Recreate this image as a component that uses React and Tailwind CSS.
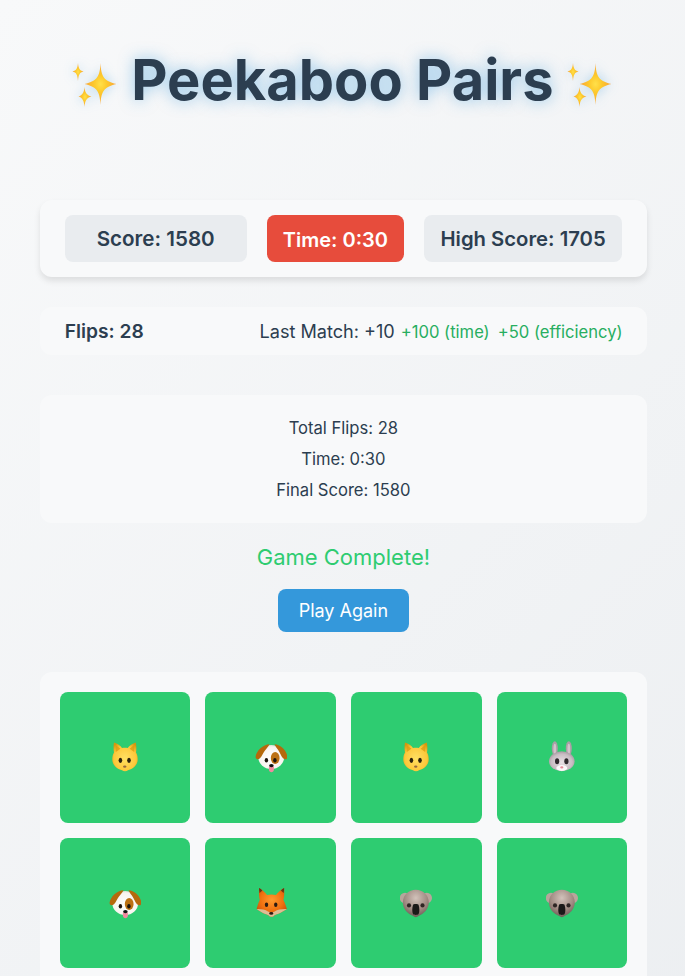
const Sparkles = () => (
    <svg viewBox="1.5 0 46 46" className="mt-2 h-[46px] w-[46px] shrink-0 blur-[0.3px] drop-shadow-[0_0_6px_rgba(52,152,219,0.35)]">
        <defs>
            <radialGradient id="spark">
                <stop offset="0%" stopColor="#ffe04a" />
                <stop offset="40%" stopColor="#fdc92c" />
                <stop offset="100%" stopColor="#f9a33a" />
            </radialGradient>
        </defs>
        <path fill="url(#spark)" d="M30 1 C30.6 14 33 19 46 22 C33 25 30.6 30 30 43 C29.4 30 27 25 14 22 C27 19 29.4 14 30 1Z" />
        <path fill="url(#spark)" d="M7.5 1 C7.9 6 9 8.5 13 9.5 C9 10.5 7.9 13 7.5 19 C7.1 13 6 10.5 2 9.5 C6 8.5 7.1 6 7.5 1Z" />
        <path fill="url(#spark)" d="M14 25 C14.4 30 16 33.5 21 34.5 C16 35.5 14.4 39 14 45 C13.6 39 12 35.5 8 34.5 C12 33.5 13.6 30 14 25Z" />
    </svg>
);

const Cat = () => (
    <svg viewBox="0 0 32 32" className="h-8 w-8 blur-[0.3px]">
        <defs>
            <radialGradient id="catFace" cx="50%" cy="55%" r="62%">
                <stop offset="0%" stopColor="#ffe063" />
                <stop offset="70%" stopColor="#fdc83a" />
                <stop offset="100%" stopColor="#d4960e" />
            </radialGradient>
        </defs>
        <path fill="url(#catFace)" d="M5 1.6 C8.5 2.6 11.5 5 13 7 C14.8 6.6 17 6.6 18.8 7 C20.3 5 23.5 2.6 26.8 1.6 C27.6 5 27.5 8.5 27 11.5 C28.6 14 29 17.5 28.5 20.5 C27.5 25.5 22.5 28.5 19 29.2 C17.5 30.6 14.5 30.6 13 29.2 C9.5 28.5 4.5 25.5 3.5 20.5 C3 17.5 3.4 14 5 11.5 C4.4 8.5 4.3 5 5 1.6Z" />
        <path fill="#d9990f" d="M6.4 3.8 L11.4 7.8 L6.8 11Z M25.5 3.8 L20.6 7.8 L25.2 11Z" opacity="0.75" />
        <ellipse cx="11.4" cy="19.3" rx="1.8" ry="2.6" fill="#2c210b" />
        <ellipse cx="20" cy="19.3" rx="1.8" ry="2.6" fill="#2c210b" />
        <ellipse cx="15.75" cy="25.6" rx="1.7" ry="1.2" fill="#94683e" />
    </svg>
);

const Dog = () => (
    <svg viewBox="0 0 32 32" className="h-8 w-8 blur-[0.3px]">
        <defs>
            <radialGradient id="dogFace" cx="50%" cy="55%" r="60%">
                <stop offset="0%" stopColor="#ffffff" />
                <stop offset="78%" stopColor="#f8f4ef" />
                <stop offset="100%" stopColor="#d6ccc2" />
            </radialGradient>
        </defs>
        <ellipse cx="16.2" cy="16" rx="13" ry="12" fill="url(#dogFace)" />
        {/* Ears wrap over the top of the head */}
        <path fill="#b5690c" d="M14.5 3.2 C8 3.4 1.6 9.5 .6 15.5 C.4 18.5 3 19 5 17.2 C7.2 15 8 12 9.6 10 C11 8 13.5 5.5 14.5 3.2Z" />
        <path fill="#b5690c" d="M19.5 3.3 C25.5 3.4 31.6 9.5 32.4 15.5 C32.6 18.5 30 19 28 17.2 C26 15 25.2 12 23.8 10 C22.4 8 20.5 5.5 19.5 3.3Z" />
        <ellipse cx="20.2" cy="17" rx="4.4" ry="6" fill="#bb7013" />
        <ellipse cx="11.4" cy="19.2" rx="1.7" ry="2.3" fill="#1d140d" />
        <ellipse cx="19.9" cy="19.2" rx="1.7" ry="2.3" fill="#1d140d" />
        <path fill="#f08aa0" d="M13.9 25.5 H18.9 V28.5 C18.9 32 13.9 32 13.9 28.5Z" />
        <ellipse cx="16.4" cy="24.6" rx="2.3" ry="1.6" fill="#111" />
    </svg>
);

const Rabbit = () => (
    <svg viewBox="0 0 32 32" className="h-8 w-8 blur-[0.3px]">
        <defs>
            <radialGradient id="rabbitFace" cx="50%" cy="55%" r="58%">
                <stop offset="0%" stopColor="#e8e1e5" />
                <stop offset="70%" stopColor="#c8bdc3" />
                <stop offset="100%" stopColor="#9d9198" />
            </radialGradient>
        </defs>
        <ellipse cx="8.8" cy="7.5" rx="3" ry="7.3" fill="#ab9ea6" />
        <ellipse cx="22.8" cy="7.5" rx="3" ry="7.3" fill="#ab9ea6" />
        <ellipse cx="8.8" cy="8" rx="1.4" ry="5.3" fill="#d3c3ca" />
        <ellipse cx="22.8" cy="8" rx="1.4" ry="5.3" fill="#d3c3ca" />
        <ellipse cx="15.8" cy="20.2" rx="12.8" ry="10" fill="url(#rabbitFace)" />
        <ellipse cx="15.8" cy="27" rx="5.5" ry="3" fill="#fbf8f9" />
        <ellipse cx="11.1" cy="20.2" rx="2.1" ry="3" fill="#2f2a2e" />
        <ellipse cx="20.4" cy="20.2" rx="2.1" ry="3" fill="#2f2a2e" />
        <ellipse cx="15.8" cy="26.4" rx="1.6" ry="1.1" fill="#e58b9a" />
    </svg>
);

const Fox = () => (
    <svg viewBox="0 0 32 32" className="h-8 w-8 blur-[0.3px]">
        <defs>
            <radialGradient id="foxFace" cx="50%" cy="42%" r="58%">
                <stop offset="0%" stopColor="#ff9a2e" />
                <stop offset="65%" stopColor="#f0700f" />
                <stop offset="100%" stopColor="#c9530b" />
            </radialGradient>
        </defs>
        <path fill="url(#foxFace)" d="M4.1 1 C7.5 2.8 10.5 6 12 8 C14.5 7.2 18.5 7.2 21 8 C22.5 6 25.5 2.8 29.1 1 C29.4 5 29.4 9.5 28.4 13 C30 16 31.2 19.5 31.9 22 C28 25 22 27.4 19.5 28.2 C18 30.2 15 30.2 13.5 28.2 C11 27.4 5 25 1.6 22 C2.3 19.5 3.2 16 4.8 13 C3.9 9.5 3.8 5 4.1 1Z" />
        <path fill="#4a2a14" d="M4.1 1 C5.2 1.6 6.3 2.4 7.3 3.4 L4.6 6 C4.2 4.5 4.1 2.6 4.1 1Z M29.1 1 C28 1.6 26.9 2.4 25.9 3.4 L28.6 6 C29 4.5 29.1 2.6 29.1 1Z" opacity="0.8" />
        <path fill="#dcbd95" d="M1.6 22 C6 21.8 10 22.5 13 24.4 L16.3 26 L19.7 24.4 C22.5 22.5 27 21.8 31.9 22 C28 25 22 27.4 19.5 28.2 C18 30.2 15 30.2 13.5 28.2 C11 27.4 5 25 1.6 22Z" />
        <ellipse cx="11.5" cy="17.75" rx="1.7" ry="2.2" fill="#2a1a12" />
        <ellipse cx="20.75" cy="17.75" rx="1.7" ry="2.2" fill="#2a1a12" />
        <ellipse cx="16.25" cy="26.4" rx="2" ry="1.3" fill="#2a1a12" />
    </svg>
);

const Koala = () => (
    <svg viewBox="0 0 32 32" className="h-8 w-8 blur-[0.3px]">
        <defs>
            <radialGradient id="koalaFace" cx="50%" cy="30%" r="72%">
                <stop offset="0%" stopColor="#d2c2ba" />
                <stop offset="60%" stopColor="#a18b83" />
                <stop offset="100%" stopColor="#6b5853" />
            </radialGradient>
        </defs>
        <circle cx="5" cy="11" r="5.2" fill="#b8a59c" />
        <circle cx="26.8" cy="11" r="5.2" fill="#b8a59c" />
        <path fill="url(#koalaFace)" d="M15.8 2.8 C23 2.8 28.5 8 28.8 15 C29 22 23.5 27 18.5 29 C17 30.5 14.7 30.5 13.2 29 C8 27 2.6 22 2.9 15 C3.2 8 8.6 2.8 15.8 2.8Z" />
        <circle cx="9" cy="18.4" r="2.1" fill="#2e2624" />
        <circle cx="22.5" cy="18.4" r="2.1" fill="#2e2624" />
        <path fill="#1b1918" d="M13 18 C13 16.7 18.6 16.7 18.6 18 C19.6 21 19.6 25 18.6 27 C17.4 28.2 14.2 28.2 13 27 C12 25 12 21 13 18Z" />
    </svg>
);

const cards = [Cat, Dog, Cat, Rabbit, Dog, Fox, Koala, Koala];

export default function App() {
    return (
        <div className="h-[976px] overflow-hidden bg-[linear-gradient(135deg,#f8f9fa_0%,#e9ecef_100%)] [background-size:100%_1500px] pl-[39.7px] pr-[37.9px] pt-[47px] font-['Inter',sans-serif] text-[#2c3e50]">
            {/* Title with soft blue glow */}
            <h1 className="flex items-center justify-center gap-[13px] pr-[2px] text-[56px] font-bold leading-[67px] [text-shadow:0_0_15px_rgba(52,152,219,0.5)]">
                <Sparkles />
                <span>Peekaboo Pairs</span>
                <Sparkles />
            </h1>

            <div className="mt-[86px] flex items-center justify-between rounded-xl bg-[#f8f9fa] px-[25px] py-[15px] shadow-[0_4px_6px_rgba(0,0,0,0.1)]">
                <div className="flex h-[47px] w-[182px] items-center justify-center rounded-lg bg-[#e9ecef] pt-0.5 text-[20.6px] font-semibold">
                    Score: 1580
                </div>
                <div className="flex h-[47px] w-[137px] items-center justify-center rounded-lg bg-[#e74c3c] pt-0.5 text-[20px] font-semibold text-white">
                    Time: 0:30
                </div>
                <div className="flex h-[47px] w-[198px] items-center justify-center rounded-lg bg-[#e9ecef] pt-0.5 text-[20.3px] font-semibold">
                    High Score: 1705
                </div>
            </div>

            <div className="mt-[30px] flex h-[48px] items-center justify-between rounded-xl bg-[#f8f9fa] pl-[25px] pr-[24.5px] pt-px">
                <span className="text-[19.2px] font-semibold">Flips: 28</span>
                <div className="flex items-baseline gap-2">
                    <span className="-mr-0.5 text-[18.1px]">Last Match: +10</span>
                    <span className="text-[16.6px] text-[#27ae60]">+100 (time)</span>
                    <span className="text-[16.6px] text-[#27ae60]">+50 (efficiency)</span>
                </div>
            </div>

            <div className="mt-10 flex h-[128px] flex-col items-center justify-center rounded-xl bg-[#f8f9fa] text-[16.6px] leading-[31px]">
                <p>Total Flips: 28</p>
                <p>Time: 0:30</p>
                <p>Final Score: 1580</p>
            </div>

            <p className="mt-[19px] text-center text-[22px] leading-[30px] text-[#2ecc71]">Game Complete!</p>

            <div className="mt-[17px] flex justify-center">
                <button className="h-[43px] w-[131px] rounded-lg bg-[#3498db] pt-px text-lg text-white">Play Again</button>
            </div>

            <div className="mt-10 grid grid-cols-4 gap-[15px] rounded-xl bg-[#f8f9fa] p-5">
                {cards.map((Icon, i) => (
                    <div key={i} className="flex aspect-square items-center justify-center rounded-lg bg-[#2ecc71]">
                        <Icon />
                    </div>
                ))}
            </div>
        </div>
    );
}
